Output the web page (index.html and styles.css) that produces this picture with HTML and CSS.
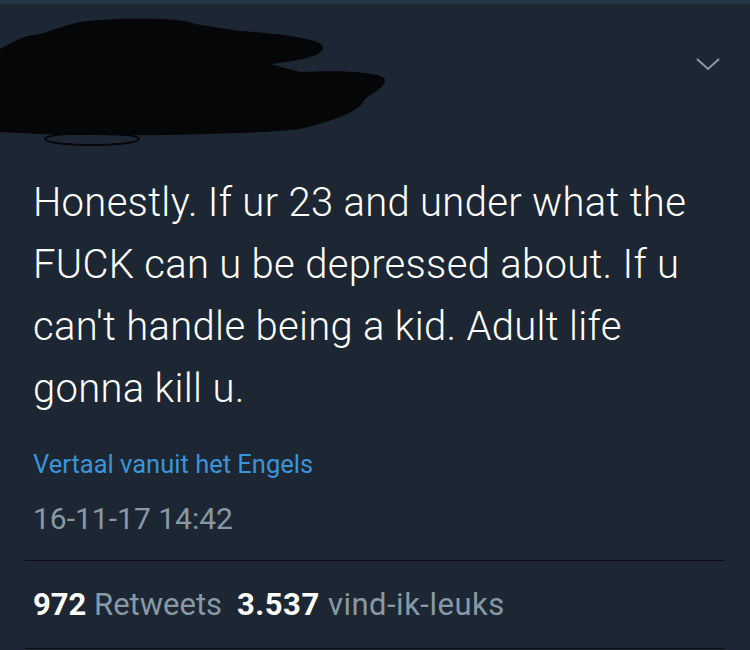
FILE: index.html
```html
<!DOCTYPE html>
<html lang="nl">
<head>
<meta charset="UTF-8">
<title>Tweet</title>
<link rel="stylesheet" href="styles.css">
</head>
<body>
<div class="topbar"></div>
<div class="tweet">
    <!-- kopregel: naam is weggekrast -->
    <div class="head">
        <svg class="scribble" width="390" height="146" viewBox="0 0 390 146">
            <path fill="#050608" d="M80 18 C120 13,180 13,195 20 L240 27 C280 30,325 35,323 44 C322 52,300 57,270 60 L300 68 C340 66,388 68,385 77 C383 86,370 90,365 95 C360 110,320 120,300 125 C250 131,100 133,40 130 L0 128 L0 45 C10 40,20 32,40 30 C55 25,70 20,80 18 Z"/>
            <g fill="none" stroke="#050608" stroke-width="2">
                <ellipse cx="92" cy="135" rx="47" ry="6"/>
                <path d="M4 128 C20 120,12 110,2 104"/>
            </g>
        </svg>
        <svg class="chevron" width="26" height="16" viewBox="0 0 26 16">
            <path d="M2 3 L13 13 L24 3" fill="none" stroke="#8899a6" stroke-width="2"/>
        </svg>
    </div>
    <p class="text">Honestly. If ur 23 and under what the FUCK can u be depressed about. If u can't handle being a kid. Adult life gonna kill u.</p>
    <a class="translate" href="javascript:;">Vertaal vanuit het Engels</a>
    <div class="time">16-11-17 14:42</div>
    <div class="stats">
        <span><b>972</b> Retweets</span>
        <span class="likes"><b>3.537</b> vind-ik-leuks</span>
    </div>
</div>
</body>
</html>
```

FILE: styles.css
```css
body,div,p{margin:0;padding:0;}
body{background:#1c2733;color:#fff;font-family:"Roboto","Liberation Sans",sans-serif;height:650px;overflow:hidden;}
.topbar{height:4px;background:#243447;}
.tweet{padding:0 25px 0 25px;}
.head{display:flex;justify-content:space-between;align-items:flex-start;height:160px;margin-left:-25px;}
.scribble{display:block;margin-top:0;}
.chevron{display:block;margin-top:52px;margin-right:4px;}
.text{padding:0 26px 0 8px;font-size:40px;font-weight:300;line-height:62px;letter-spacing:0.3px;margin-top:8px;}
.translate{display:block;padding:0 8px;margin-top:29px;color:#3b94d9;font-size:25.5px;text-decoration:none;line-height:30px;}
.time{padding:0 8px;margin-top:22px;color:#8899a6;font-size:30px;line-height:36px;}
.stats{padding:0 8px;margin-top:23px;border-top:1px solid #0b0f14;border-bottom:1px solid #0b0f14;height:87px;display:flex;align-items:center;gap:15px;font-size:31px;color:#8899a6;}
.stats b{color:#fff;font-weight:700;}
.stats .likes{letter-spacing:0.5px;}
```
